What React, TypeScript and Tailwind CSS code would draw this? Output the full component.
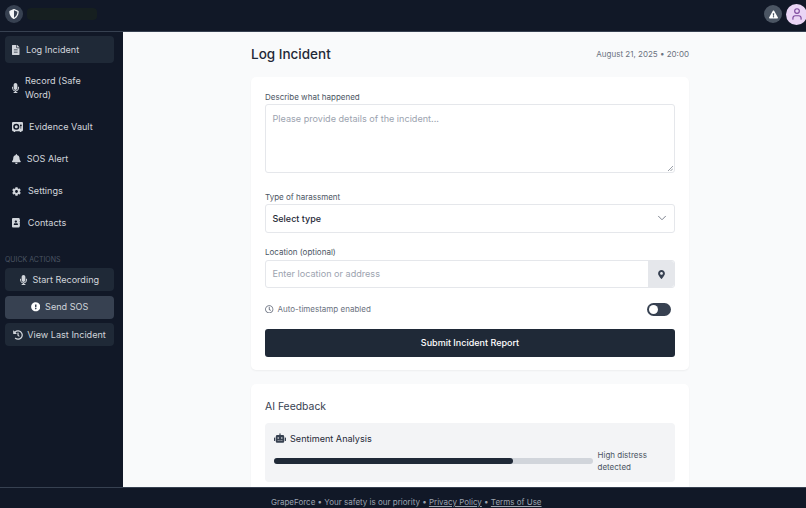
import { FaFileAlt, FaMicrophone, FaBell, FaCog, FaAddressBook, FaExclamationCircle, FaHistory, FaMapMarkerAlt, FaRobot, FaRegClock, FaShieldAlt, FaExclamationTriangle } from "react-icons/fa";
import { FaVault } from "react-icons/fa6";
import { ChevronDown, User } from "lucide-react";

const nav = [
  { icon: FaMicrophone, label: "Record (Safe Word)", gap: "gap-[6px]", h: "h-[42px]", ic: "h-[10px] w-[7px]" },
  { icon: FaVault, label: "Evidence Vault", gap: "gap-[6px]", h: "h-[28px]", ic: "h-[10px] w-[11px]" },
  { icon: FaBell, label: "SOS Alert", gap: "gap-[6px]", h: "h-[28px]", ic: "h-[10px] w-[8.75px]" },
  { icon: FaCog, label: "Settings", gap: "gap-[7px]", h: "h-[28px]", ic: "h-[9px] w-[9px]" },
  { icon: FaAddressBook, label: "Contacts", gap: "gap-[7.5px]", h: "h-[28px]", ic: "h-[9.5px] w-[8.3px]" },
];

export default function App() {
  return (
    <div className="flex h-[508px] w-[806px] flex-col overflow-hidden bg-[#f9fafb] font-['Inter',sans-serif] text-[#1f2937]">
      <header className="flex h-[32px] shrink-0 items-center justify-between border-b border-[#374151] bg-[#111827] pb-[3px] pl-[5px]">
        <div className="flex items-center gap-[4px]">
          <div className="flex size-[18px] items-center justify-center rounded-full bg-[#374151]">
            <FaShieldAlt className="size-[10px] text-[#f3f4f6]" />
          </div>
          <div className="h-[12px] w-[70px] rounded-sm bg-[#161f20]" />
        </div>
        <div className="-mr-[1px] flex items-center gap-[4px]">
          <div className="flex size-[18px] items-center justify-center rounded-full bg-[#4b5563]">
            <FaExclamationTriangle className="size-[9px] text-white" />
          </div>
          <div className="flex size-[21px] items-center justify-center rounded-full bg-[#ead5f5]">
            <User className="size-[14px] text-[#7e4a9e]" />
          </div>
        </div>
      </header>

      <div className="flex min-h-0 flex-1">
        <aside className="flex w-[123px] shrink-0 flex-col bg-[#111827] pl-[5px] pr-[9px] pt-[4px] text-[9.1px] text-[#d1d5db]">
          <div className="flex h-[27px] items-center gap-[6.5px] rounded-[4px] bg-[#1f2937] pl-[7px]">
            <FaFileAlt className="h-[10px] w-[7.5px] shrink-0" />
            <span>Log Incident</span>
          </div>
          {nav.map((n) => (
            <div key={n.label} className={`mt-[4px] flex items-center rounded-[4px] pl-[7px] pr-[6px] leading-[14px] ${n.gap} ${n.h}`}>
              <n.icon className={`shrink-0 ${n.ic}`} />
              <span>{n.label}</span>
            </div>
          ))}
          <div className="mt-[18px] text-[7px] uppercase leading-[10px] text-[#4b5563]">Quick Actions</div>
          <div className="mt-[3px] flex flex-col gap-[4.5px]">
            <div className="flex h-[23px] items-center justify-center gap-[5.5px] rounded-[4px] bg-[#1f2937]">
              <FaMicrophone className="h-[10px] w-[7px]" />
              <span>Start Recording</span>
            </div>
            <div className="flex h-[23px] items-center justify-center gap-[5px] rounded-[4px] bg-[#374151]">
              <FaExclamationCircle className="size-[9.5px] text-white" />
              <span>Send SOS</span>
            </div>
            <div className="flex h-[23px] items-center justify-center gap-[4px] rounded-[4px] bg-[#1f2937]">
              <FaHistory className="size-[10px]" />
              <span>View Last Incident</span>
            </div>
          </div>
        </aside>

        <main className="min-w-0 flex-1 overflow-hidden pl-[128px] pr-[117px] pt-[12px]">
          <div className="flex items-center justify-between">
            <h1 className="text-[13.5px] font-medium leading-[20px] text-[#1f2937]">Log Incident</h1>
            <span className="text-[8px] text-[#6b7280]">August 21, 2025 • 20:00</span>
          </div>
          <section className="mt-[13px] rounded-[5px] bg-white p-[14px] pb-[13px] shadow-[0_1px_2px_rgba(0,0,0,0.05)]">
            <label className="block text-[8px] leading-[12px] text-[#4b5563]">Describe what happened</label>
            <div className="relative mt-[1px] h-[69px] rounded-[3px] border border-[#e5e7eb] px-[6.5px] py-[7px] text-[9.1px] text-[#9ca3af]">
              Please provide details of the incident...
              <svg className="absolute bottom-[1px] right-[1px]" width="6" height="6" viewBox="0 0 6 6"><path d="M1 6L6 1M3.5 6L6 3.5" stroke="#6b7280" strokeWidth="0.7" /></svg>
            </div>
            <label className="mt-[18px] block text-[8px] leading-[12px] text-[#4b5563]">Type of harassment</label>
            <div className="mt-[1px] flex h-[28.5px] items-center justify-between rounded-[3px] border border-[#e5e7eb] pl-[6.5px] pr-[5px] text-[9px] font-medium text-[#1f2937]">
              <span>Select type</span>
              <ChevronDown className="size-[14px] text-[#6b7280]" strokeWidth={1.5} />
            </div>
            <label className="mt-[14px] block text-[8px] leading-[11px] text-[#4b5563]">Location (optional)</label>
            <div className="mt-[2.5px] flex h-[28px] items-stretch rounded-[3px] border border-[#e5e7eb] text-[9.1px] text-[#9ca3af]">
              <span className="flex flex-1 items-center pl-[6.5px]">Enter location or address</span>
              <div className="flex w-[26px] items-center justify-center rounded-r-[3px] bg-[#e5e7eb]">
                <FaMapMarkerAlt className="size-[9px] text-[#374151]" />
              </div>
            </div>
            <div className="mt-[14px] flex h-[14px] items-center justify-between pr-[4px]">
              <div className="flex items-center gap-[4px] text-[8px] text-[#6b7280]">
                <FaRegClock className="size-[8.5px]" />
                <span>Auto-timestamp enabled</span>
              </div>
              <div className="flex h-[13px] w-[24px] items-center rounded-full bg-[#374151] px-[2px]">
                <div className="size-[9px] rounded-full bg-white" />
              </div>
            </div>
            <button className="mt-[13px] block h-[28px] w-full rounded-[3px] bg-[#1f2937] text-[9px] font-medium text-white">Submit Incident Report</button>
          </section>
          <section className="mt-[14px] rounded-[5px] bg-white px-[14px] pb-[14px] pt-[15px] shadow-[0_1px_2px_rgba(0,0,0,0.05)]">
            <h2 className="text-[10.4px] font-normal leading-[15px] text-[#374151]">AI Feedback</h2>
            <div className="mt-[8.5px] rounded-[4px] bg-[#f3f4f6] p-[9px]">
              <div className="flex items-center gap-[4px] text-[9.1px] leading-[13px] text-[#1f2937]">
                <FaRobot className="size-[12px] text-[#374151]" />
                <span>Sentiment Analysis</span>
              </div>
              <div className="mt-[4.5px] flex items-center gap-[4.5px]">
                <div className="h-[6px] w-[319px] shrink-0 rounded-full bg-[#d1d5db]">
                  <div className="h-full w-[75%] rounded-full bg-[#1f2937]" />
                </div>
                <span className="text-[8px] leading-[12px] text-[#4b5563]">High distress detected</span>
              </div>
            </div>
          </section>
        </main>
      </div>

      <footer className="h-[21px] shrink-0 border-t border-[#374151] bg-[#111827] pl-[271px] pt-[8px] text-[8px] leading-[12px] text-[#9ca3af]">
        <span>GrapeForce • Your safety is our priority • <u>Privacy Policy</u> • <u>Terms of Use</u></span>
      </footer>
    </div>
  );
}
